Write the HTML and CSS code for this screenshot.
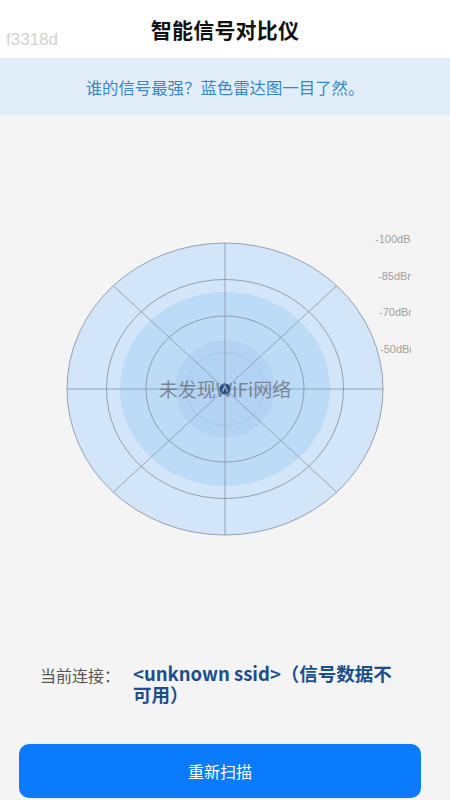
FILE: index.html
```html
<!DOCTYPE html>
<html lang="zh">
<head>
<meta charset="utf-8">
<link rel="stylesheet" href="styles.css">
</head>
<body>
<div class="app">
  <header class="topbar">
    <h1 class="title">智能信号对比仪</h1>
    <span class="build-tag">f3318d</span>
  </header>
  <div class="banner">谁的信号最强？蓝色雷达图一目了然。</div>
  <section class="chart">
    <div class="canvas">
      <svg class="radar" width="372" height="540" viewBox="-186 -274 372 540">
        <ellipse cx="0" cy="0" rx="158" ry="146" fill="#d3e5f8"/>
        <ellipse cx="0" cy="0" rx="105" ry="97" fill="#bcdbf6"/>
        <ellipse cx="0" cy="0" rx="50" ry="48.5" fill="#b2d3f3"/>
        <g fill="none" stroke="#7d8ea3" stroke-width="0.8">
          <ellipse cx="0" cy="0" rx="158" ry="146"/>
          <ellipse cx="0" cy="0" rx="118.5" ry="109.5"/>
          <ellipse cx="0" cy="0" rx="79" ry="73"/>
        </g>
        <ellipse cx="0" cy="0" rx="39.5" ry="36.5" fill="none" stroke="#a5bcd6" stroke-width="0.6"/>
        <g stroke="#8596ad" stroke-width="0.8">
          <line x1="-158" y1="0" x2="158" y2="0"/>
          <line x1="0" y1="-146" x2="0" y2="146"/>
          <line x1="-111.7" y1="-103.2" x2="111.7" y2="103.2"/>
          <line x1="-111.7" y1="103.2" x2="111.7" y2="-103.2"/>
        </g>
        <g class="ring-label">
          <text x="150" y="-146">-100dBm</text>
          <text x="153" y="-109">-85dBm</text>
          <text x="154" y="-73">-70dBm</text>
          <text x="155" y="-36">-50dBm</text>
        </g>
        <circle cx="0" cy="0" r="5.5" fill="#1d4f8c"/>
        <path d="M-2.4 2.6 L0 -3 L2.4 2.6" fill="none" stroke="#c9dcf2" stroke-width="1.2"/>
      </svg>
      <div class="empty-note">未发现WiFi网络</div>
    </div>
  </section>
  <div class="connection">
    <span class="conn-label">当前连接：</span>
    <span class="conn-value">&lt;unknown ssid&gt;（信号数据不可用）</span>
  </div>
  <button class="rescan">重新扫描</button>
</div>
</body>
</html>
```
FILE: styles.css
```css
html, body {
  margin: 0;
  padding: 0;
}
body {
  background: #f4f4f4;
  font-family: "Noto Sans CJK SC", "Noto Sans", sans-serif;
  width: 450px;
  height: 800px;
  overflow: hidden;
}
.app {
  display: flex;
  flex-direction: column;
}
.topbar {
  position: relative;
  height: 58px;
  background: #ffffff;
  display: flex;
  align-items: center;
  justify-content: center;
}
.title {
  margin: 0;
  font-size: 21px;
  font-weight: 700;
  color: #111;
  line-height: 1;
  letter-spacing: 0.2px;
}
.build-tag {
  position: absolute;
  left: 6px;
  top: 30px;
  font-family: "Liberation Sans", sans-serif;
  font-size: 17px;
  color: #d2d2d2;
}
.banner {
  height: 57px;
  background: #e1eefa;
  color: #3a87c6;
  font-size: 16.4px;
  display: flex;
  align-items: center;
  justify-content: center;
}
.chart {
  height: 540px;
  display: flex;
  justify-content: center;
}
.canvas {
  position: relative;
  width: 372px;
  height: 540px;
  overflow: hidden;
}
.radar {
  display: block;
}
.ring-label text {
  font-family: "Liberation Sans", sans-serif;
  font-size: 11px;
  fill: #a0a0a0;
}
.empty-note {
  position: absolute;
  left: 0;
  right: 0;
  top: 262px;
  text-align: center;
  font-size: 19px;
  line-height: 24px;
  color: rgba(105, 111, 120, 0.78);
}
.connection {
  display: flex;
  padding: 8px 40px 0 40px;
  height: 89px;
  box-sizing: border-box;
}
.conn-label {
  width: 93px;
  flex: none;
  font-size: 16px;
  color: #555;
  line-height: 24px;
}
.conn-value {
  width: 272px;
  font-size: 18.5px;
  font-weight: 700;
  color: #1b4e8b;
  line-height: 21px;
}
.rescan {
  align-self: flex-start;
  margin-left: 19px;
  width: 402px;
  height: 54px;
  border: none;
  border-radius: 10px;
  background: #0b7bfe;
  color: #fff;
  font-family: "Noto Sans CJK SC", sans-serif;
  font-size: 16px;
}
```
